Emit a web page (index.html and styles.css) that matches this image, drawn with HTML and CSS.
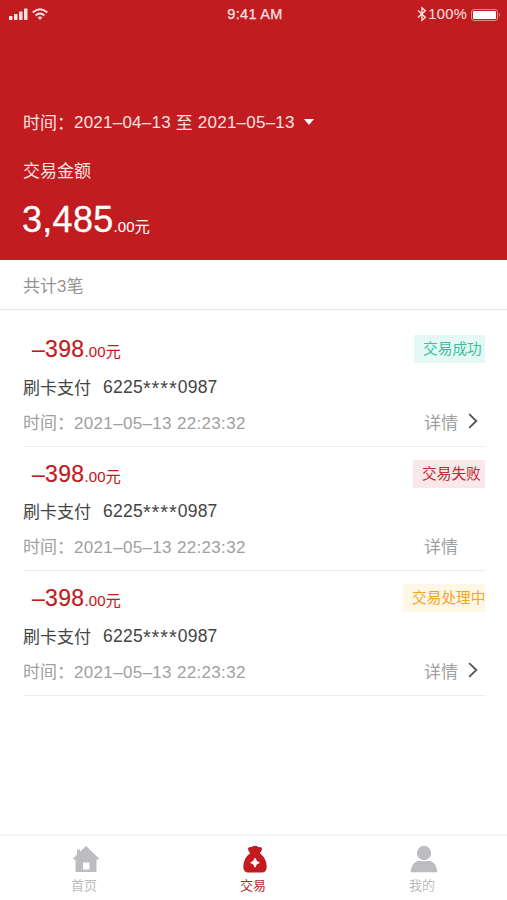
FILE: index.html
```
<!DOCTYPE html>
<html lang="zh-CN">
<head>
<meta charset="utf-8">
<meta name="viewport" content="width=device-width">
<title>交易</title>
<link rel="stylesheet" href="styles.css">
</head>
<body>
<header class="hero">
  <div class="status">
    <svg class="signal" viewBox="0 0 40 14" width="40" height="14">
      <g fill="#fbe4e0"><rect x="0" y="9" width="3.500" height="4" rx=".7"/><rect x="5" y="7" width="3.500" height="6" rx=".7"/><rect x="10" y="4.500" width="3.500" height="8.500" rx=".7"/><rect x="15" y="1.500" width="3.500" height="11.500" rx=".7"/></g>
      <g fill="none" stroke="#fbe4e0" stroke-width="2"><path d="M23.700 5.500Q31 -1 38.300 5.500"/><path d="M26.600 8.400Q31 4.600 35.400 8.400"/></g>
      <path d="M28.700 10.300Q31 8.500 33.300 10.300L31 13z" fill="#fbe4e0"/>
    </svg>
    <span class="clock">9:41 AM</span>
    <div class="power">
      <svg viewBox="0 0 10 16" width="10" height="16"><path d="M1 4.500L8.300 11.200L5 14.200V1.800L8.300 4.800L1 11.500" fill="none" stroke="#fbe4e0" stroke-width="1.400"/></svg>
      <span>100%</span>
      <svg class="battery" viewBox="0 0 30 14" width="30" height="14"><rect x=".5" y="1.500" width="26" height="11" rx="2.500" fill="none" stroke="#e08a8d"/><rect x="2" y="3" width="23" height="8" rx="1" fill="#fff"/><path d="M28 5Q30 7 28 9z" fill="#e08a8d"/></svg>
    </div>
  </div>
  <div class="range"><span>时间：</span><span class="num">2021–04–13</span><span class="to">至</span><span class="num">2021–05–13</span><i class="caret"></i></div>
  <div class="label">交易金额</div>
  <div class="total">3,485<small>.00元</small></div>
</header>
<div class="count">共计3笔</div>
<main class="list">
  <section class="item">
    <div class="row amount-row"><span class="amount">–398<small>.00元</small></span><span class="tag ok">交易成功</span></div>
    <div class="row name-row"><span>刷卡支付</span><span class="card">6225<span class="stars">****</span>0987</span></div>
    <div class="row time-row"><span>时间：<span class="stamp">2021–05–13 22:23:32</span></span><span class="detail">详情<svg viewBox="0 0 10 16" width="10" height="16"><path d="M1.200 1.200L8.300 8L1.200 14.800"/></svg></span></div>
  </section>
  <section class="item">
    <div class="row amount-row"><span class="amount">–398<small>.00元</small></span><span class="tag fail">交易失败</span></div>
    <div class="row name-row"><span>刷卡支付</span><span class="card">6225<span class="stars">****</span>0987</span></div>
    <div class="row time-row"><span>时间：<span class="stamp">2021–05–13 22:23:32</span></span><span class="detail">详情</span></div>
  </section>
  <section class="item">
    <div class="row amount-row"><span class="amount">–398<small>.00元</small></span><span class="tag pending">交易处理中</span></div>
    <div class="row name-row"><span>刷卡支付</span><span class="card">6225<span class="stars">****</span>0987</span></div>
    <div class="row time-row"><span>时间：<span class="stamp">2021–05–13 22:23:32</span></span><span class="detail">详情<svg viewBox="0 0 10 16" width="10" height="16"><path d="M1.200 1.200L8.300 8L1.200 14.800"/></svg></span></div>
  </section>
</main>
<nav class="tabs">
  <a class="tab"><svg viewBox="0 0 28 28" width="28" height="28"><path d="M14 1L27 13.500L25.500 15L24.500 14V27H3.500V14L2.500 15L1 13.500L5 9.600V4.500H8V6.800z" fill="#bdbdc1"/><path d="M11 17.500H17.500V24.500H11z" fill="#fff"/></svg><span>首页</span></a>
  <a class="tab active"><svg viewBox="0 0 28 28" width="28" height="28"><path d="M7 3.500Q7.500 1.300 10.300 2.200Q14 -.5 17.700 2.200Q20.500 1.300 21 3.500Q21.200 5.500 18.800 8.200Q25.700 13 25.700 22Q25.700 27.500 20.500 27.500H7.500Q2.300 27.500 2.300 22Q2.300 13 9.200 8.200Q6.800 5.500 7 3.500z" fill="#c21b20"/><path d="M14 13.200Q14.800 17 18.300 17.700Q14.800 18.400 14 22.200Q13.200 18.400 9.700 17.700Q13.200 17 14 13.200z" fill="#fff" stroke="#fff"/></svg><span>交易</span></a>
  <a class="tab"><svg viewBox="0 0 28 28" width="28" height="28"><circle cx="14" cy="8" r="7.200" fill="#bdbdc1"/><path d="M.8 27.200Q1.300 16.500 9.500 15.400Q14 17.200 18.500 15.400Q26.700 16.500 27.200 27.200z" fill="#bdbdc1"/></svg><span>我的</span></a>
</nav>
</body>
</html>
```
FILE: styles.css
```
* { box-sizing: border-box; }
body {
  margin: 0;
  height: 900px;
  display: flex;
  flex-direction: column;
  overflow: hidden;
  background: #fff;
  font-family: "Liberation Sans", "Noto Sans CJK SC", sans-serif;
  font-size: 17px;
  color: #444;
}
.hero {
  height: 260px;
  flex: none;
  background: #c21b20;
  color: #fff;
  white-space: nowrap;
}
.status {
  height: 30px;
  display: grid;
  grid-template-columns: 1fr auto 1fr;
  align-items: center;
  padding: 0 6px 2px 9px;
  font-size: 14.5px;
  color: #fbe4e0;
}
.clock { -webkit-text-stroke: .25px #fbe4e0; letter-spacing: .3px; }
.power { display: flex; align-items: center; justify-content: flex-end; gap: 1px; font-size: 14.7px; letter-spacing: .3px; }
.battery { margin: 2px 0 0 3px; }
.range {
  margin-top: 76px;
  height: 30px;
  padding-left: 23px;
  display: flex;
  align-items: center;
  color: #fbe4e0;
}
.num { letter-spacing: .23px; padding-top: 3px; font-size: 17px; }
.to { margin: 0 5px; }
.caret {
  margin: 2px 0 0 9px;
  border: 5px solid transparent;
  border-top: 6px solid #fff;
  border-bottom: 0;
}
.label { margin-top: 21px; padding-left: 23px; height: 30px; line-height: 30px; color: #fbe4e0; }
.total {
  margin-top: 7px;
  padding-left: 22px;
  height: 52px;
  line-height: 52px;
  font-size: 36px;
  letter-spacing: .3px;
  -webkit-text-stroke: .3px #fff;
}
.total small { font-size: 15px; letter-spacing: .1px; -webkit-text-stroke: .1px #fff; }
.count {
  flex: none;
  height: 50px;
  line-height: 53px;
  padding-left: 23px;
  color: #939393;
  border-bottom: 1px solid #e9e9e9;
}
.list { flex: 1; padding: 12px 22px 0 23px; }
.item { height: 124.5px; padding-top: 10px; border-bottom: 1px solid #ebebeb; }
.row { display: flex; align-items: center; white-space: nowrap; }
.amount-row { height: 34px; justify-content: space-between; }
.amount {
  padding: 1px 0 0 9px;
  font-size: 23px;
  letter-spacing: .3px;
  color: #c21b20;
  -webkit-text-stroke: .2px #c21b20;
}
.amount small { font-size: 15px; letter-spacing: .2px; -webkit-text-stroke: .1px #c21b20; }
.tag {
  height: 28px;
  line-height: 28px;
  padding-left: 9px;
  font-size: 14.7px;
}
.ok { width: 71px; background: #e4f9f5; color: #41bd9d; }
.fail { width: 72px; background: #fae7e9; color: #c22934; }
.pending { width: 82px; background: #fff7e5; color: #f3a51e; }
.name-row { height: 40px; gap: 12px; }
.card { font-size: 17.5px; line-height: 20px; padding-top: 2px; letter-spacing: .25px; }
.stars { font-size: 20px; line-height: 1; vertical-align: -2px; letter-spacing: .9px; }
.time-row { height: 30px; justify-content: space-between; color: #a0a0a0; }
.stamp { letter-spacing: .33px; }
.detail { width: 61px; display: flex; align-items: center; gap: 10px; }
.detail svg { fill: none; stroke: #555; stroke-width: 1.8; }
.tabs {
  flex: none;
  height: 66px;
  display: grid;
  grid-template-columns: repeat(3, 1fr);
  border-top: 2px solid #f3f3f3;
}
.tab { display: flex; flex-direction: column; align-items: center; padding-top: 9px; font-size: 13px; color: #bcbcc0; }
.tab svg { margin-left: 2px; }
.tab span { line-height: 20px; margin: 3px 1px 0 0; }
.active { color: #c21b20; }
```
